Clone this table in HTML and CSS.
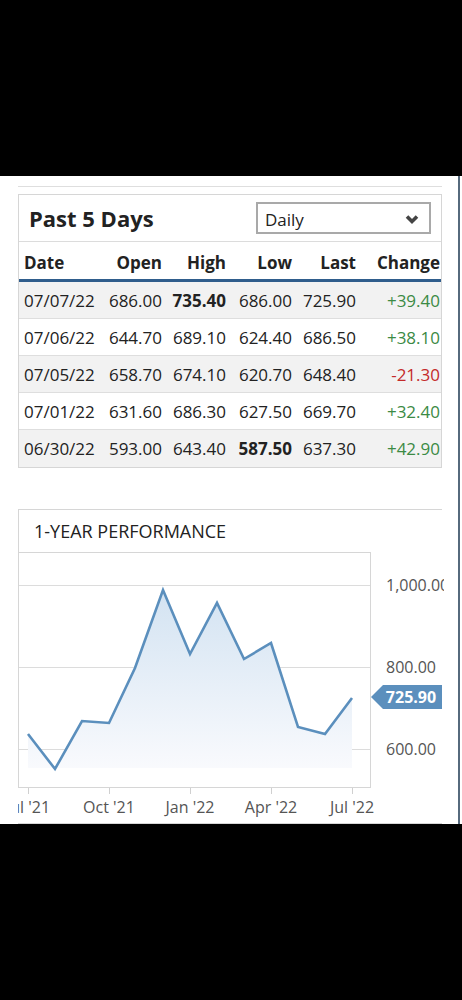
FILE: index.html
```html
<!DOCTYPE html>
<html lang="en">
<head>
    <meta charset="UTF-8">
    <meta name="viewport" content="width=device-width, initial-scale=1.0">
    <title>Past 5 Days</title>
    <link rel="stylesheet" href="styles.css">
</head>
<body>
    <div class="screen">
        <div class="content">
            <div class="top-rule"></div>

            <div class="days-card">
                <div class="days-header">
                    <h2>Past 5 Days</h2>
                    <div class="period-select">
                        <span>Daily</span>
                        <svg width="16" height="12" viewBox="0 0 16 12">
                            <polyline points="3,3.5 8,8.5 13,3.5" fill="none" stroke="#444" stroke-width="3.6" stroke-linejoin="miter"/>
                        </svg>
                    </div>
                </div>

                <div class="quote-table">
                    <div class="quote-row head">
                        <div class="cell date">Date</div>
                        <div class="cell">Open</div>
                        <div class="cell">High</div>
                        <div class="cell">Low</div>
                        <div class="cell">Last</div>
                        <div class="cell change">Change</div>
                    </div>
                    <div class="quote-row shaded">
                        <div class="cell date">07/07/22</div>
                        <div class="cell">686.00</div>
                        <div class="cell strong">735.40</div>
                        <div class="cell">686.00</div>
                        <div class="cell">725.90</div>
                        <div class="cell change up">+39.40</div>
                    </div>
                    <div class="quote-row">
                        <div class="cell date">07/06/22</div>
                        <div class="cell">644.70</div>
                        <div class="cell">689.10</div>
                        <div class="cell">624.40</div>
                        <div class="cell">686.50</div>
                        <div class="cell change up">+38.10</div>
                    </div>
                    <div class="quote-row shaded">
                        <div class="cell date">07/05/22</div>
                        <div class="cell">658.70</div>
                        <div class="cell">674.10</div>
                        <div class="cell">620.70</div>
                        <div class="cell">648.40</div>
                        <div class="cell change down">-21.30</div>
                    </div>
                    <div class="quote-row">
                        <div class="cell date">07/01/22</div>
                        <div class="cell">631.60</div>
                        <div class="cell">686.30</div>
                        <div class="cell">627.50</div>
                        <div class="cell">669.70</div>
                        <div class="cell change up">+32.40</div>
                    </div>
                    <div class="quote-row shaded last-row">
                        <div class="cell date">06/30/22</div>
                        <div class="cell">593.00</div>
                        <div class="cell">643.40</div>
                        <div class="cell strong">587.50</div>
                        <div class="cell">637.30</div>
                        <div class="cell change up">+42.90</div>
                    </div>
                </div>
            </div>

            <div class="perf-card">
                <div class="perf-title">1-YEAR PERFORMANCE</div>
                <svg class="perf-chart" width="426" height="271" viewBox="0 0 426 271">
                    <defs>
                        <linearGradient id="areaFill" x1="0" y1="0" x2="0" y2="1">
                            <stop offset="0" stop-color="#d3e3f2"/>
                            <stop offset="1" stop-color="#f9fafd"/>
                        </linearGradient>
                    </defs>

                    <!-- grid -->
                    <line x1="0" y1="33.5" x2="352" y2="33.5" stroke="#dcdcdc"/>
                    <line x1="0" y1="115.5" x2="352" y2="115.5" stroke="#dcdcdc"/>
                    <line x1="0" y1="197.5" x2="352" y2="197.5" stroke="#dcdcdc"/>
                    <rect x="0.5" y="0.5" width="352" height="235" fill="none" stroke="#d6d6d6"/>

                    <!-- area + line -->
                    <polygon fill="url(#areaFill)" points="10,182 37,217 64,169 91,171 117,116 145,38 172,102 199,51 226,107 253,91 280,175 307,182 334,146 334,216 10,216"/>
                    <polyline fill="none" stroke="#5b8fbd" stroke-width="2.6" stroke-linejoin="miter" points="10,182 37,217 64,169 91,171 117,116 145,38 172,102 199,51 226,107 253,91 280,175 307,182 334,146"/>

                    <!-- x ticks -->
                    <g stroke="#d0d0d0">
                        <line x1="10.5" y1="236" x2="10.5" y2="242"/>
                        <line x1="91.5" y1="236" x2="91.5" y2="242"/>
                        <line x1="172.5" y1="236" x2="172.5" y2="242"/>
                        <line x1="253.5" y1="236" x2="253.5" y2="242"/>
                        <line x1="334.5" y1="236" x2="334.5" y2="242"/>
                    </g>
                    <g class="axis-text" text-anchor="middle">
                        <text x="10" y="261">Jul '21</text>
                        <text x="91" y="261">Oct '21</text>
                        <text x="172" y="261">Jan '22</text>
                        <text x="253" y="261">Apr '22</text>
                        <text x="334" y="261">Jul '22</text>
                    </g>

                    <!-- y labels -->
                    <g class="axis-text">
                        <text x="368" y="39">1,000.00</text>
                        <text x="368" y="121">800.00</text>
                        <text x="368" y="203">600.00</text>
                    </g>

                    <!-- last price badge -->
                    <polygon fill="#5b8fbd" points="353,145 365,133 424,133 424,157 365,157"/>
                    <text class="badge-text" x="393" y="151" text-anchor="middle">725.90</text>
                </svg>
            </div>
        </div>
    </div>
</body>
</html>
```

FILE: styles.css
```css
body {
    margin: 0;
    background: #000;
    font-family: 'Open Sans', 'Noto Sans', sans-serif;
    color: #222;
}

.screen {
    width: 462px;
    height: 648px;
    margin-top: 176px;
    background: #fff;
}

.content {
    width: 460px;
    height: 648px;
    box-sizing: border-box;
    padding: 10px 16px 0 18px;
    border-right: 2px solid #566a7d;
}

.top-rule {
    height: 1px;
    background: #dedede;
}

.days-card {
    margin-top: 7px;
    border: 1px solid #d6d6d6;
}

.days-header {
    display: flex;
    align-items: center;
    justify-content: space-between;
    height: 46px;
    padding: 0 10px;
    border-bottom: 1px solid #dcdcdc;
}

.days-header h2 {
    margin: 0;
    font-size: 22px;
    font-weight: 700;
    color: #222;
}

.period-select {
    display: flex;
    align-items: center;
    justify-content: space-between;
    width: 175px;
    height: 32px;
    box-sizing: border-box;
    padding: 2px 9px 0 7px;
    border: 2px solid #a9a9a9;
    font-size: 17px;
}

.period-select svg {
    display: block;
}

.quote-row {
    display: grid;
    grid-template-columns: 82px 67px 64px 66px 64px 81px;
    height: 36px;
    align-items: center;
    font-size: 17px;
    border-bottom: 1px solid #dedede;
}

.quote-row.head {
    height: 40px;
    padding-top: 4px;
    box-sizing: border-box;
    border-bottom: 3px solid #2f5d8c;
    font-weight: 700;
}

.quote-row.shaded {
    background: #f2f2f2;
}

.quote-row.last-row {
    border-bottom: none;
    height: 37px;
}

.cell {
    text-align: right;
    padding-right: 6px;
    white-space: nowrap;
}

.cell.date {
    text-align: left;
    padding: 0 0 0 5px;
}

.cell.change {
    padding-right: 3px;
}

.cell.strong {
    font-weight: 700;
}

.cell.up {
    color: #3b8a44;
}

.cell.down {
    color: #c42a2a;
}

.perf-card {
    margin-top: 41px;
    border-top: 1px solid #d6d6d6;
    border-bottom: 1px solid #d6d6d6;
}

.perf-title {
    height: 42px;
    line-height: 42px;
    padding-left: 15px;
    border-left: 1px solid #d6d6d6;
    font-size: 18px;
    color: #222;
}

.perf-chart {
    display: block;
}

.axis-text {
    font-family: 'Open Sans', 'Noto Sans', sans-serif;
    font-size: 16px;
    fill: #555;
}

.badge-text {
    font-family: 'Open Sans', 'Noto Sans', sans-serif;
    font-size: 16px;
    font-weight: 700;
    fill: #fff;
}
```
